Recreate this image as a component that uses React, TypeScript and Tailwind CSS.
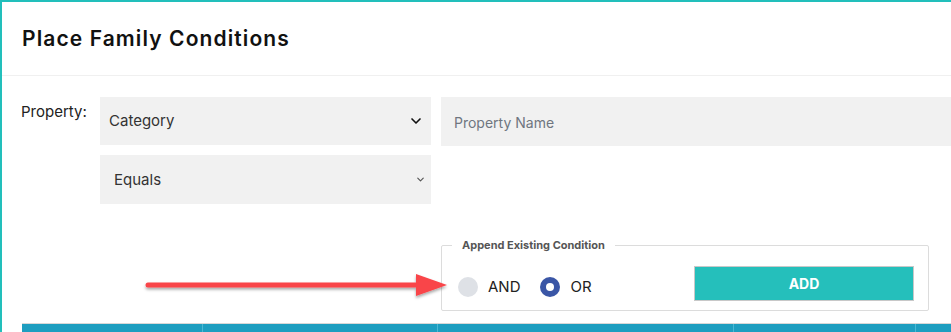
import React from 'react';

const ChevronDown = ({ className }: { className?: string }) => (
  <svg className={className} viewBox="0 0 24 24" fill="none" stroke="currentColor" strokeWidth="2.5" strokeLinecap="round" strokeLinejoin="round">
    <path d="M6 9l6 6 6-6" />
  </svg>
);

const Radio = ({ checked, label }: { checked?: boolean; label: string }) => (
  <label className="flex items-center gap-[10px]">
    {checked ? (
      <span className="w-[20px] h-[20px] rounded-full bg-[#3a56a6] flex items-center justify-center">
        <span className="w-[8px] h-[8px] rounded-full bg-white" />
      </span>
    ) : (
      <span className="w-[20px] h-[20px] rounded-full bg-[#dee1e6]" />
    )}
    <span className="text-[15px] leading-[20px] text-[#222]">{label}</span>
  </label>
);

export default function App() {
  return (
    <div
      className="relative w-[951px] h-[332px] overflow-hidden bg-white border-t-2 border-l-2 border-[#22bfbb]"
      style={{ fontFamily: 'Inter, "Open Sans", sans-serif' }}
    >
      {/* header */}
      <div className="h-[74px] pl-[20px] flex items-center border-b border-[#f0f0f0]">
        <h1 className="text-[21px] font-semibold text-[#111] tracking-[1.1px]">Place Family Conditions</h1>
      </div>

      {/* form */}
      <div className="flex pt-[21px] pl-[19px]">
        <div className="w-[79px] pt-[4px] text-[15px] text-[#222]">Property:</div>
        <div className="flex flex-col gap-[10px]">
          <div className="w-[331px] h-[48px] bg-[#f1f1f1] flex items-center justify-between pl-[9px] pr-[7px]">
            <span className="text-[15px] text-[#333]">Category</span>
            <ChevronDown className="w-[16px] h-[16px] text-[#111]" />
          </div>
          <div className="w-[331px] h-[49px] bg-[#f1f1f1] flex items-center justify-between pl-[14px] pr-[5px]">
            <span className="text-[15px] text-[#333] pt-[1px]">Equals</span>
            <ChevronDown className="w-[11px] h-[11px] text-[#555]" />
          </div>
        </div>
        <div className="ml-[10px] flex-1 h-[49px] bg-[#f1f1f1] flex items-center pl-[13px]">
          <span className="text-[14px] text-[#6f7680] pt-[1px]">Property Name</span>
        </div>
      </div>

      {/* append condition */}
      <div className="flex pl-[439px] mt-[33px]">
        <fieldset className="w-[488px] h-[74px] border border-[#dcdcdc] rounded-[2px] px-[10px] pt-0 pb-0">
          <legend className="px-[10px] text-[11px] font-bold text-[#555]">Append Existing Condition</legend>
          <div className="flex items-start pt-[12px] pl-[6px]">
            <div className="mt-[11px]">
              <Radio label="AND" />
            </div>
            <div className="ml-[20px] mt-[11px]">
              <Radio checked label="OR" />
            </div>
            <button className="ml-auto mr-[4px] w-[220px] h-[35px] bg-[#25bfbb] border border-[#c8c8c8] text-white text-[14px] font-bold">
              ADD
            </button>
          </div>
        </fieldset>
      </div>

      {/* table header */}
      <div className="absolute left-[20px] right-0 top-[321px] h-[12px] bg-[#1e9ec0] border-t border-[#d8d8d8] flex">
        <div className="w-[181px] border-r border-[#4cb8d4]" />
        <div className="w-[235px] border-r border-[#4cb8d4]" />
        <div className="w-[296px] border-r border-[#4cb8d4]" />
        <div className="w-[182px] border-r border-[#4cb8d4]" />
      </div>

      {/* annotation arrow */}
      <svg className="absolute left-0 top-0 pointer-events-none" width="951" height="332">
        <defs>
          <filter id="sh" x="-10%" y="-50%" width="120%" height="200%">
            <feDropShadow dx="0" dy="2" stdDeviation="1.5" floodColor="#000" floodOpacity="0.35" />
          </filter>
        </defs>
        <g filter="url(#sh)" transform="translate(-2,-2)">
          <line x1="148" y1="285" x2="420" y2="285" stroke="#f94449" strokeWidth="5" strokeLinecap="round" />
          <polygon points="416,274 447,285 416,296" fill="#f94449" />
        </g>
      </svg>
    </div>
  );
}
